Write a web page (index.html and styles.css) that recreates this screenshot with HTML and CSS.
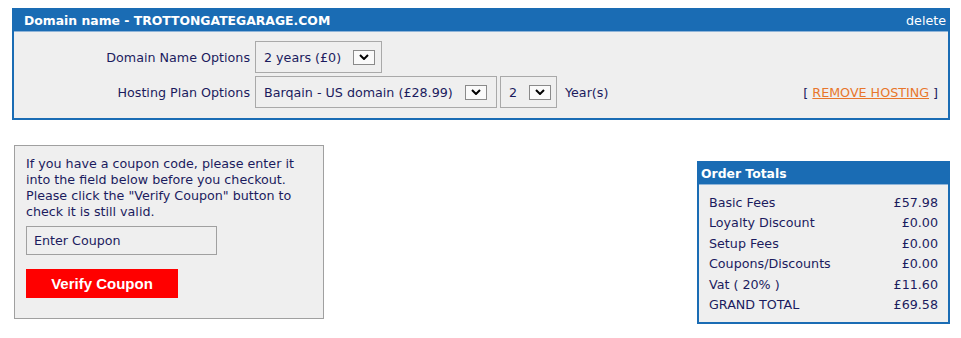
FILE: index.html
```html
<!DOCTYPE html>
<html lang="en">
<head>
<meta charset="UTF-8">
<meta name="viewport" content="width=device-width, initial-scale=1.0">
<title>Basket</title>
<link rel="stylesheet" href="styles.css">
</head>
<body>

<div class="domain-box">
  <div class="box-head">
    <span>Domain name - TROTTONGATEGARAGE.COM</span>
    <a href="#" class="delete">delete</a>
  </div>
  <div class="domain-body">
    <div class="opt-row">
      <span class="opt-label">Domain Name Options</span>
      <div class="select sel-domain"><span>2 years (£0)</span><span class="arrow"><svg width="10" height="6" viewBox="0 0 10 6"><path d="M1 1 L5 5 L9 1" fill="none" stroke="#000" stroke-width="2"/></svg></span></div>
    </div>
    <div class="opt-row">
      <span class="opt-label">Hosting Plan Options</span>
      <div class="select sel-plan"><span>Barqain - US domain (£28.99)</span><span class="arrow"><svg width="10" height="6" viewBox="0 0 10 6"><path d="M1 1 L5 5 L9 1" fill="none" stroke="#000" stroke-width="2"/></svg></span></div>
      <div class="select sel-years"><span>2</span><span class="arrow"><svg width="10" height="6" viewBox="0 0 10 6"><path d="M1 1 L5 5 L9 1" fill="none" stroke="#000" stroke-width="2"/></svg></span></div>
      <span class="years">Year(s)</span>
      <span class="remove">[ <a href="#">REMOVE HOSTING</a> ]</span>
    </div>
  </div>
</div>

<div class="bottom">
  <div class="coupon">
    <p>If you have a coupon code, please enter it into the field below before you checkout. Please click the "Verify Coupon" button to check it is still valid.</p>
    <input type="text" class="coupon-input" value="Enter Coupon">
    <button class="verify">Verify Coupon</button>
  </div>

  <div class="totals">
    <div class="box-head">Order Totals</div>
    <table class="totals-table">
      <tr><td>Basic Fees</td><td>£57.98</td></tr>
      <tr><td>Loyalty Discount</td><td>£0.00</td></tr>
      <tr><td>Setup Fees</td><td>£0.00</td></tr>
      <tr><td>Coupons/Discounts</td><td>£0.00</td></tr>
      <tr><td>Vat ( 20% )</td><td>£11.60</td></tr>
      <tr><td>GRAND TOTAL</td><td>£69.58</td></tr>
    </table>
  </div>
</div>

</body>
</html>
```

FILE: styles.css
```css
body {
  margin: 0;
  padding: 8px 11px 0 12px;
  font-family: "DejaVu Sans", Verdana, sans-serif;
  font-size: 12.7px;
  color: #1b1b5e;
  background: #fff;
}
.domain-box {
  border: 2px solid #1a6cb4;
  background: #efefef;
  height: 108px;
}
.box-head {
  background: #1a6cb4;
  color: #fff;
  font-weight: bold;
  font-size: 12.4px;
  height: 21px;
  line-height: 21px;
  padding: 0 10px;
  display: flex;
  justify-content: space-between;
  border-bottom: 1px solid #8fb4d8;
}
.box-head .delete {
  color: #fff;
  font-weight: normal;
  font-size: 12.7px;
  text-decoration: none;
  margin-right: -8px;
}
.domain-body {
  padding-top: 9px;
}
.opt-row {
  display: flex;
  align-items: center;
  margin-bottom: 3px;
}
.opt-label {
  width: 236px;
  text-align: right;
  margin-right: 5px;
}
.select {
  display: flex;
  align-items: center;
  border: 1px solid #a9a9a9;
  padding: 0 4px 0 8px;
  box-sizing: border-box;
  height: 32px;
}
.select .arrow {
  width: 20px;
  height: 13px;
  border: 1px solid #8a8a8a;
  background: #fafafa;
  display: flex;
  align-items: center;
  justify-content: center;
  margin-left: 12px;
}
.sel-domain { width: 127px; }
.sel-plan { width: 242px; margin-right: 3px; }
.sel-years { width: 57px; }
.years {
  margin-left: 8px;
}
.remove {
  margin-left: auto;
  margin-right: 10px;
}
.remove a {
  color: #e8762b;
}
.bottom {
  display: flex;
  justify-content: space-between;
  align-items: flex-start;
  margin-top: 25px;
  padding-left: 2px;
}
.coupon {
  width: 286px;
  height: 162px;
  border: 1px solid #a0a0a0;
  background: #efefef;
  padding: 10px 11px 0 11px;
}
.coupon p {
  margin: 0 0 6px 0;
  line-height: 16px;
}
.coupon-input {
  display: block;
  width: 191px;
  height: 29px;
  box-sizing: border-box;
  border: 1px solid #a0a0a0;
  background: #efefef;
  font: inherit;
  color: inherit;
  padding: 0 7px;
  margin-bottom: 14px;
}
.verify {
  width: 152px;
  height: 29px;
  background: #ff0000;
  border: none;
  color: #fff;
  font-family: "Liberation Sans", Arial, sans-serif;
  font-weight: bold;
  font-size: 15px;
  cursor: pointer;
}
.totals {
  width: 249px;
  margin-top: 16px;
  border: 2px solid #1a6cb4;
  background: #efefef;
}
.totals .box-head {
  padding: 0 2px;
}
.totals-table {
  width: 100%;
  border-collapse: collapse;
  margin: 8px 0 7px 0;
}
.totals-table td {
  padding: 0 10px;
  height: 20.4px;
  line-height: 20.4px;
}
.totals-table td:last-child {
  text-align: right;
}
```
